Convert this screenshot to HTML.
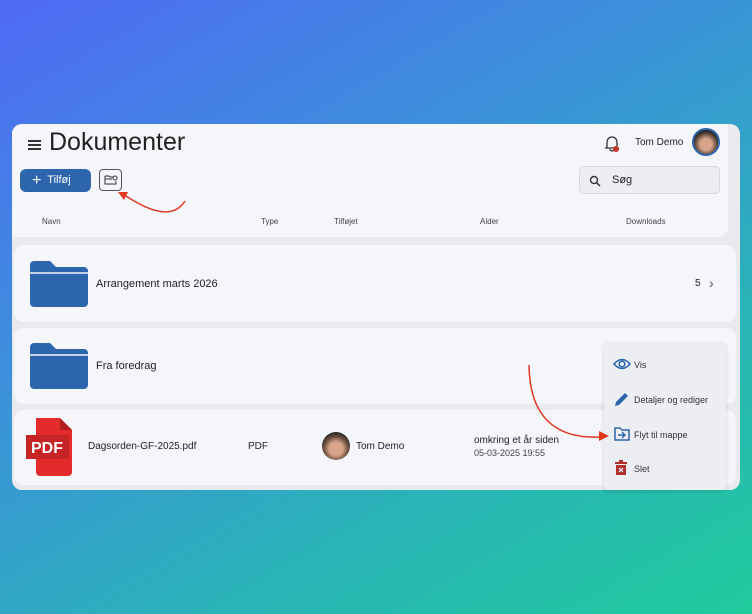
<!DOCTYPE html>
<html><head><meta charset="utf-8"><style>
*{box-sizing:border-box;margin:0;padding:0}
body{width:752px;height:614px;overflow:hidden;background:linear-gradient(150deg,#4f6af5 0%,#3a94d8 40%,#2ab3b8 70%,#1fcb9c 100%);font-family:"Liberation Sans",sans-serif;color:#222;position:relative}
.card{position:absolute;left:12px;top:124px;width:728px;height:366px;background:#e9eaee;border-radius:10px;overflow:hidden}
.head{position:absolute;left:0;top:0;width:716px;height:113px;background:#f5f6fa;border-bottom-right-radius:10px}
.row{position:absolute;left:2px;width:722px;background:#f5f6fa;border-radius:10px}
.t{position:absolute;font-size:11px;white-space:nowrap}
.menu{position:absolute;left:604px;top:343px;width:122px;height:147px;background:#eceef2;border-radius:4px;box-shadow:0 1px 4px rgba(0,0,0,.15)}
.mi{position:absolute;left:30px;font-size:9px;color:#333}
</style></head><body>
<div class="card">
 <div class="head">
  <div style="position:absolute;left:16px;top:16px;width:13px;height:2px;background:#333;box-shadow:0 4px #333,0 8px #333"></div>
  <div class="t" style="left:37px;top:4px;font-size:25px;color:#222">Dokumenter</div>
  <div style="position:absolute;left:8px;top:45px;width:71px;height:23px;background:#2d66ad;border-radius:6px;color:#fff;font-size:11px;line-height:23px;padding-left:12px"><span style="font-size:16px;vertical-align:-2px">+</span>&nbsp; Tilføj</div>
  <div style="position:absolute;left:87px;top:45px;width:23px;height:22px;border:1px solid #555;border-radius:4px"><svg style="position:absolute;left:4px;top:4px" width="14" height="12"><path d="M1 2 H5 L6 3 H9 M1 2 V10 H12 V7" fill="none" stroke="#333" stroke-width="1"/><path d="M1 5 H8" stroke="#333"/><circle cx="11" cy="4" r="2" fill="none" stroke="#333"/></svg></div>
  <svg style="position:absolute;left:592px;top:10px" width="16" height="18"><path d="M3 13 V8 a5 5 0 0 1 10 0 V13 L14 14 H2 Z M6 15 a2 2 0 0 0 4 0" fill="none" stroke="#333" stroke-width="1.3"/><circle cx="12" cy="15" r="3" fill="#c0392b"/></svg>
  <div class="t" style="left:623px;top:13px;font-size:10px">Tom Demo</div>
  <div style="position:absolute;left:680px;top:4px;width:28px;height:28px;border-radius:50%;background:radial-gradient(circle at 50% 60%,#d9a58a 30%,#6b5040 55%,#2a2a2a 70%);border:2px solid #2d66ad"></div>
  <div style="position:absolute;left:567px;top:42px;width:141px;height:28px;background:#eceef2;border:1px solid #d5d7dc;border-radius:5px"><svg style="position:absolute;left:9px;top:8px" width="12" height="12"><circle cx="5" cy="5" r="3.5" fill="none" stroke="#333" stroke-width="1.4"/><path d="M7.5 7.5 L11 11" stroke="#333" stroke-width="1.5"/></svg><span class="t" style="left:32px;top:7px">Søg</span></div>
  <div class="t" style="left:30px;top:93px;font-size:8px;color:#444">Navn</div>
  <div class="t" style="left:249px;top:93px;font-size:8px;color:#444">Type</div>
  <div class="t" style="left:322px;top:93px;font-size:8px;color:#444">Tilføjet</div>
  <div class="t" style="left:468px;top:93px;font-size:8px;color:#444">Alder</div>
  <div class="t" style="left:614px;top:93px;font-size:8px;color:#444">Downloads</div>
 </div>
 <div class="row" style="top:121px;height:77px">
  <svg style="position:absolute;left:16px;top:16px" width="58" height="46"><path d="M0 4 a4 4 0 0 1 4-4 H20 L26 6 H54 a4 4 0 0 1 4 4 V42 a4 4 0 0 1-4 4 H4 a4 4 0 0 1-4-4Z" fill="#2d66ad"/><path d="M0 12 H58" stroke="#f5f6fa" stroke-width="1.5"/></svg>
  <div class="t" style="left:82px;top:33px">Arrangement marts 2026</div>
  <div class="t" style="left:681px;top:33px;font-size:10px">5</div>
  <div class="t" style="left:695px;top:30px;font-size:14px;color:#555">›</div>
 </div>
 <div class="row" style="top:204px;height:76px">
  <svg style="position:absolute;left:16px;top:15px" width="58" height="46"><path d="M0 4 a4 4 0 0 1 4-4 H20 L26 6 H54 a4 4 0 0 1 4 4 V42 a4 4 0 0 1-4 4 H4 a4 4 0 0 1-4-4Z" fill="#2d66ad"/><path d="M0 12 H58" stroke="#f5f6fa" stroke-width="1.5"/></svg>
  <div class="t" style="left:82px;top:32px">Fra foredrag</div>
 </div>
 <div class="row" style="top:286px;height:75px">
  <svg style="position:absolute;left:12px;top:8px" width="56" height="58"><path d="M10 0 H34 L46 12 V54 a4 4 0 0 1-4 4 H14 a4 4 0 0 1-4-4Z" fill="#e32b2b"/><path d="M34 0 V12 H46Z" fill="#b01e1e"/><rect x="0" y="17" width="43" height="24" fill="#c62424"/><text x="5" y="35" font-family="Liberation Sans" font-weight="bold" font-size="16" fill="#fff">PDF</text></svg>
  <div class="t" style="left:74px;top:31px;font-size:10px">Dagsorden-GF-2025.pdf</div>
  <div class="t" style="left:234px;top:31px;font-size:10px">PDF</div>
  <div style="position:absolute;left:308px;top:22px;width:28px;height:28px;border-radius:50%;background:radial-gradient(circle at 50% 60%,#d9a58a 30%,#6b5040 55%,#2a2a2a 75%)"></div>
  <div class="t" style="left:342px;top:31px;font-size:10px">Tom Demo</div>
  <div class="t" style="left:460px;top:25px;font-size:10px">omkring et år siden</div>
  <div class="t" style="left:460px;top:38px;font-size:9px;color:#444">05-03-2025 19:55</div>
 </div>
</div>
<div class="menu">
 <svg style="position:absolute;left:9px;top:15px" width="18" height="12"><path d="M1 6 Q9 -3 17 6 Q9 15 1 6Z" fill="none" stroke="#2d66ad" stroke-width="1.6"/><circle cx="9" cy="6" r="2.8" fill="none" stroke="#2d66ad" stroke-width="1.6"/></svg>
 <div class="mi" style="top:17px">Vis</div>
 <svg style="position:absolute;left:10px;top:48px" width="16" height="16"><path d="M1 15 L2 11 L11 2 L14 5 L5 14Z" fill="#2d66ad"/></svg>
 <div class="mi" style="top:52px">Detaljer og rediger</div>
 <svg style="position:absolute;left:10px;top:84px" width="16" height="14"><path d="M1 1 H6 L8 3 H15 V13 H1Z" fill="none" stroke="#2d66ad" stroke-width="1.5"/><path d="M4 8 H11 M8 5 L11 8 L8 11" fill="none" stroke="#2d66ad" stroke-width="1.4"/></svg>
 <div class="mi" style="top:87px">Flyt til mappe</div>
 <svg style="position:absolute;left:11px;top:117px" width="12" height="15"><rect x="0" y="2" width="12" height="2" fill="#b03030"/><rect x="4" y="0" width="4" height="2" fill="#b03030"/><rect x="1" y="5" width="10" height="10" fill="#b03030"/><path d="M4 8 L8 12 M8 8 L4 12" stroke="#fff" stroke-width="1.2"/></svg>
 <div class="mi" style="top:121px">Slet</div>
</div>
<svg style="position:absolute;left:0;top:0" width="752" height="614">
 <path d="M185 201 Q170 225 126 196" fill="none" stroke="#e0391f" stroke-width="1.5"/><path d="M118 192 L128 192 L124 200Z" fill="#e0391f"/>
 <path d="M529 365 Q530 440 600 437" fill="none" stroke="#e0391f" stroke-width="1.5"/><path d="M609 436 L599 431 L599 441Z" fill="#e0391f"/>
</svg>
</body></html>
